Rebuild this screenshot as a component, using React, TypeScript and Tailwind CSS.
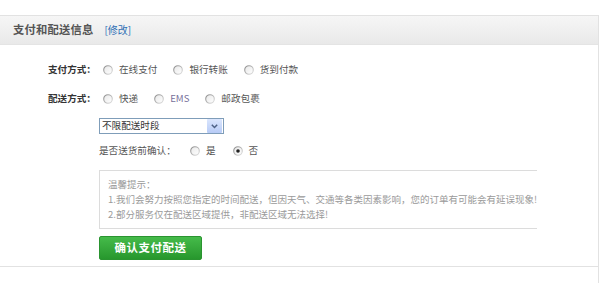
import React from "react";

const FONT = '"Noto Sans CJK SC", "Noto Sans", "Liberation Sans", sans-serif';

function Radio({ checked = false }: { checked?: boolean }) {
  return (
    <svg width="10" height="10" viewBox="0 0 10 10" className="shrink-0 mt-[2px]">
      <defs>
        <linearGradient id="rb" x1="0" y1="0" x2="1" y2="1">
          <stop offset="0" stopColor="#8a8a8a" />
          <stop offset="1" stopColor="#e2e2e2" />
        </linearGradient>
        <linearGradient id="rf" x1="0" y1="0" x2="1" y2="1">
          <stop offset="0" stopColor="#e8e8e8" />
          <stop offset="1" stopColor="#ffffff" />
        </linearGradient>
      </defs>
      <circle cx="5" cy="5" r="4.3" fill="url(#rf)" stroke="url(#rb)" strokeWidth="1.1" />
      {checked && <circle cx="5" cy="5" r="1.8" fill="#222" />}
    </svg>
  );
}

function Option({ label, checked, color = "#555", last }: { label: string; checked?: boolean; color?: string; last?: boolean }) {
  return (
    <div className={`flex items-center gap-[6px] ${last ? "" : "mr-[16px]"}`}>
      <Radio checked={checked} />
      <span style={{ color }}>{label}</span>
    </div>
  );
}

export default function App() {
  return (
    <div className="w-[600px] h-[283px] bg-white pt-[15px] overflow-hidden" style={{ fontFamily: FONT }}>
      <div className="w-[599px] border-t border-r border-[#e2e2e2] h-[268px] flex flex-col">
        <div className="h-[29px] shrink-0 flex items-center pl-[13px] bg-gradient-to-b from-[#f6f6f6] to-[#e9e9e9] border-b border-[#e4e4e4]">
          <span className="text-[11.3px] font-bold text-[#555] leading-none tracking-[0.2px]">支付和配送信息</span>
          <span className="ml-[11px] text-[10px] text-[#2f6fb5] leading-none">[修改]</span>
        </div>
        <div className="h-[222px] shrink-0 pl-[48px] pt-[17px] text-[9.6px] leading-[14px] border-b border-[#e2e2e2]">
          <div className="flex items-center h-[14px]">
            <span className="w-[55px] font-bold text-[#333]">支付方式：</span>
            <Option label="在线支付" />
            <Option label="银行转账" />
            <Option label="货到付款" last />
          </div>
          <div className="flex items-center h-[14px] mt-[15px]">
            <span className="w-[55px] font-bold text-[#333]">配送方式：</span>
            <Option label="快递" />
            <Option label="EMS" color="#766f9a" />
            <Option label="邮政包裹" last />
          </div>
          <div className="ml-[51px] mt-[13px] w-[125px] h-[16px] border border-[#7f9db9] flex items-center bg-white">
            <span className="flex-1 pl-[2px] text-[#333] leading-none">不限配送时段</span>
            <div className="w-[15px] h-[14px] mr-[1px] bg-gradient-to-b from-[#dbe6fd] to-[#b7cbf6] flex items-center justify-center rounded-[1px]">
              <svg width="7" height="5" viewBox="0 0 7 5">
                <path d="M0.8 0.8 L3.5 3.5 L6.2 0.8" fill="none" stroke="#4d6185" strokeWidth="1.5" />
              </svg>
            </div>
          </div>
          <div className="ml-[51px] mt-[9px] flex items-center h-[14px] text-[#555]">
            <span className="w-[91px]">是否送货前确认：</span>
            <div className="flex items-center gap-[6px] mr-[17px]">
              <Radio />
              <span>是</span>
            </div>
            <div className="flex items-center gap-[6px]">
              <Radio checked />
              <span>否</span>
            </div>
          </div>
          <div className="ml-[51px] mt-[13px] w-[438px] h-[59px] border-t border-b border-l border-[#dcdcdc] pl-[8px] pt-[6px] text-[#9a9a9a] text-[9.5px] leading-[15px] whitespace-nowrap overflow-hidden">
            <div>温馨提示：</div>
            <div>1.我们会努力按照您指定的时间配送，但因天气、交通等各类因素影响，您的订单有可能会有延误现象!</div>
            <div>2.部分服务仅在配送区域提供，非配送区域无法选择!</div>
          </div>
          <div className="ml-[51px] mt-[7px] w-[103px] h-[24px] rounded-[2px] bg-gradient-to-b from-[#45bb4a] to-[#27972d] border border-[#2a9430] flex items-center justify-center">
            <span className="text-white font-bold text-[11.5px] tracking-[0.5px] leading-none">确认支付配送</span>
          </div>
        </div>
      </div>
    </div>
  );
}
